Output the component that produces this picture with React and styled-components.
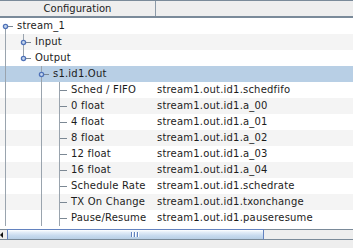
import React from 'react';
import styled, { createGlobalStyle } from 'styled-components';

const Global = createGlobalStyle`
  html, body { margin: 0; padding: 0; background: #eeeeee; overflow: hidden; }
  #root { width: 353px; height: 248px; }
`;

const Frame = styled.div`
  width: 353px;
  height: 248px;
  display: flex;
  flex-direction: column;
  background: #eeeeee;
  font-family: "DejaVu Sans", "Liberation Sans", sans-serif;
  font-size: 10px;
  color: #1c1c1c;
  overflow: hidden;
`;

const Header = styled.div`
  display: grid;
  grid-template-columns: 155px 1px 1fr;
  height: 15px;
  border-top: 1px solid #7a8a99;
  border-bottom: 2px solid #7a8a99;
  background: #eeeeee;
`;

const HeaderCell = styled.div`
  display: flex;
  align-items: center;
  justify-content: center;
  line-height: 15px;
  color: #222;
`;

const HeaderDivider = styled.div`
  background: #8c9aa8;
`;

const Body = styled.div`
  height: 211px;
  background: #ffffff;
  display: flex;
  flex-direction: column;
  overflow: hidden;
  letter-spacing: 0.2px;
`;

const Row = styled.div`
  display: grid;
  grid-template-columns: 156px 1fr;
  height: 16px;
  flex: none;
  background: ${p => (p.$selected ? '#b8cfe5' : p.$odd ? '#f4f4f4' : '#ffffff')};
`;

const TreeCell = styled.div`
  display: flex;
  align-items: center;
  white-space: nowrap;
  overflow: hidden;
`;

const Guides = styled.svg`
  flex: none;
  display: block;
`;

const Label = styled.span`
  line-height: 16px;
`;

const ValueCell = styled.div`
  padding-left: 1px;
  line-height: 16px;
  white-space: nowrap;
  overflow: hidden;
`;

const ScrollBar = styled.div`
  display: flex;
  height: 9px;
  border-top: 1px solid #7a8a99;
  border-bottom: 1px solid #7a8a99;
  background: #eeeeee;
`;

const ArrowButton = styled.div`
  width: 7px;
  flex: none;
  display: flex;
  align-items: center;
  justify-content: flex-start;
`;

const Thumb = styled.div`
  width: 257px;
  flex: none;
  margin-top: -1px;
  margin-bottom: -1px;
  box-sizing: border-box;
  border-top: 1px solid #6382bf;
  border-left: 1px solid #6382bf;
  border-right: 1px solid #6382bf;
  border-bottom: 1px solid #7a8a99;
  background: linear-gradient(#ffffff 0%, #e3edf8 25%, #c9dbef 60%, #b8cfe5 100%);
  display: flex;
  align-items: center;
  justify-content: center;
`;

const Grip = styled.div`
  display: flex;
  gap: 1px;
  margin-left: -2px;
`;

const GripBar = styled.div`
  width: 1px;
  height: 5px;
  background: #6382bf;
  border-right: 1px solid #ffffff;
`;

const Track = styled.div`
  flex: 1;
`;

const LINE = '#9aa4ae';

function TreeGuides({ depth, vlines, knob, h }) {
  const w = 17 + depth * 18;
  return (
    <Guides width={w} height={16} viewBox={`0 0 ${w} 16`}>
      {vlines.map(([x, y1, y2], i) => (
        <line key={i} x1={x + 0.5} y1={y1} x2={x + 0.5} y2={y2} stroke={LINE} strokeWidth="1" shapeRendering="crispEdges" />
      ))}
      <line x1={h[0] + 0.5} y1={8.5} x2={h[1]} y2={8.5} stroke="#7c8894" strokeWidth="1" shapeRendering="crispEdges" />
      {knob != null && (
        <circle cx={knob + 0.5} cy={8.5} r={2.1} fill="#c4d5ec" stroke="#4f72b8" strokeWidth="1.3" />
      )}
    </Guides>
  );
}

const leafV = [[5, 0, 16], [41, 0, 16], [59, 0, 16]];

const rows = [
  { label: 'stream_1', depth: 0, v: [[5, 8, 16]], knob: 5, h: [5, 13], value: '' },
  { label: 'Input', depth: 1, v: [[5, 0, 16], [23, 0, 16]], knob: 23, h: [23, 31], value: '' },
  { label: 'Output', depth: 1, v: [[5, 0, 16], [23, 0, 8]], knob: 23, h: [23, 31], value: '' },
  { label: 's1.id1.Out', depth: 2, v: [[5, 0, 16], [41, 0, 16]], knob: 41, h: [41, 49], value: '', selected: true },
  { label: 'Sched / FIFO', depth: 3, v: leafV, h: [59, 67], value: 'stream1.out.id1.schedfifo' },
  { label: '0 float', depth: 3, v: leafV, h: [59, 67], value: 'stream1.out.id1.a_00' },
  { label: '4 float', depth: 3, v: leafV, h: [59, 67], value: 'stream1.out.id1.a_01' },
  { label: '8 float', depth: 3, v: leafV, h: [59, 67], value: 'stream1.out.id1.a_02' },
  { label: '12 float', depth: 3, v: leafV, h: [59, 67], value: 'stream1.out.id1.a_03' },
  { label: '16 float', depth: 3, v: leafV, h: [59, 67], value: 'stream1.out.id1.a_04' },
  { label: 'Schedule Rate', depth: 3, v: leafV, h: [59, 67], value: 'stream1.out.id1.schedrate' },
  { label: 'TX On Change', depth: 3, v: leafV, h: [59, 67], value: 'stream1.out.id1.txonchange' },
  { label: 'Pause/Resume', depth: 3, v: leafV, h: [59, 67], value: 'stream1.out.id1.pauseresume' },
];

export default function App() {
  return (
    <Frame>
      <Global />
      <Header>
        <HeaderCell>Configuration</HeaderCell>
        <HeaderDivider />
        <HeaderCell />
      </Header>
      <Body>
        {rows.map((r, i) => (
          <Row key={i} $odd={i % 2 === 1} $selected={r.selected}>
            <TreeCell>
              <TreeGuides depth={r.depth} vlines={r.v} knob={r.knob} h={r.h} />
              <Label>{r.label}</Label>
            </TreeCell>
            <ValueCell>{r.value}</ValueCell>
          </Row>
        ))}
      </Body>
      <ScrollBar>
        <ArrowButton>
          <svg width="4" height="6" viewBox="0 0 4 6">
            <polygon points="0,3 3,0 3,6" fill="#111" />
          </svg>
        </ArrowButton>
        <Thumb>
          <Grip>
            <GripBar />
            <GripBar />
            <GripBar />
          </Grip>
        </Thumb>
        <Track />
      </ScrollBar>
    </Frame>
  );
}
